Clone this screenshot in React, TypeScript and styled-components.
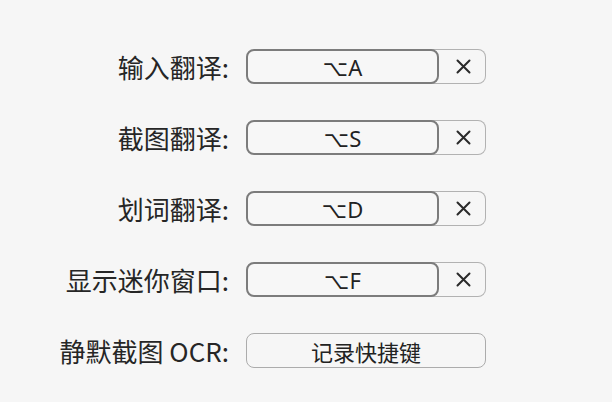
import React from 'react';
import styled, { createGlobalStyle } from 'styled-components';

const GlobalStyle = createGlobalStyle`
    html, body {
        margin: 0;
        padding: 0;
        background: #f6f6f6;
    }
`;

const Page = styled.div`
    width: 612px;
    height: 402px;
    box-sizing: border-box;
    padding-top: 49px;
    background: #f6f6f6;
    font-family: "Noto Sans CJK SC", sans-serif;
`;

const Grid = styled.div`
    display: grid;
    grid-template-columns: 229px 240px;
    column-gap: 17px;
    row-gap: 36px;
    align-items: center;
`;

const Label = styled.div`
    text-align: right;
    font-size: 26px;
    line-height: 35px;
    color: #262626;
    white-space: nowrap;
`;

const Field = styled.div`
    display: flex;
    height: 35px;
    width: 240px;
`;

const KeyBox = styled.div`
    position: relative;
    z-index: 1;
    width: 193px;
    box-sizing: border-box;
    border: 2px solid #7c7c7c;
    border-radius: 8px;
    background: #f7f7f7;
    display: flex;
    align-items: center;
    justify-content: center;
    font-family: "Noto Sans", "DejaVu Sans", sans-serif;
    font-size: 22px;
    color: #222;
`;

const ClearButton = styled.div`
    flex: 1;
    margin-left: -10px;
    padding-left: 13px;
    box-sizing: border-box;
    border: 1.5px solid #b2b2b2;
    border-left: none;
    border-radius: 0 8px 8px 0;
    display: flex;
    align-items: center;
    justify-content: center;
    color: #2a2a2a;
`;

const RecordBox = styled.div`
    height: 35px;
    width: 240px;
    box-sizing: border-box;
    border: 1.5px solid #acacac;
    border-radius: 8px;
    display: flex;
    align-items: center;
    justify-content: center;
    font-size: 22px;
    color: #222;
`;

const ClearIcon = () => (
    <svg width="15" height="15" viewBox="0 0 15 15">
        <path d="M1.5 1.5 L13.5 13.5 M13.5 1.5 L1.5 13.5" stroke="currentColor" strokeWidth="2" strokeLinecap="round" />
    </svg>
);

const shortcuts = [
    { label: '输入翻译:', key: '⌥A' },
    { label: '截图翻译:', key: '⌥S' },
    { label: '划词翻译:', key: '⌥D' },
    { label: '显示迷你窗口:', key: '⌥F' },
];

export default function App() {
    return (
        <Page>
            <GlobalStyle />
            <Grid>
                {shortcuts.map(item => (
                    <React.Fragment key={item.label}>
                        <Label>{item.label}</Label>
                        <Field>
                            <KeyBox>{item.key}</KeyBox>
                            <ClearButton><ClearIcon /></ClearButton>
                        </Field>
                    </React.Fragment>
                ))}
                <Label>静默截图 OCR:</Label>
                <RecordBox>记录快捷键</RecordBox>
            </Grid>
        </Page>
    );
}
